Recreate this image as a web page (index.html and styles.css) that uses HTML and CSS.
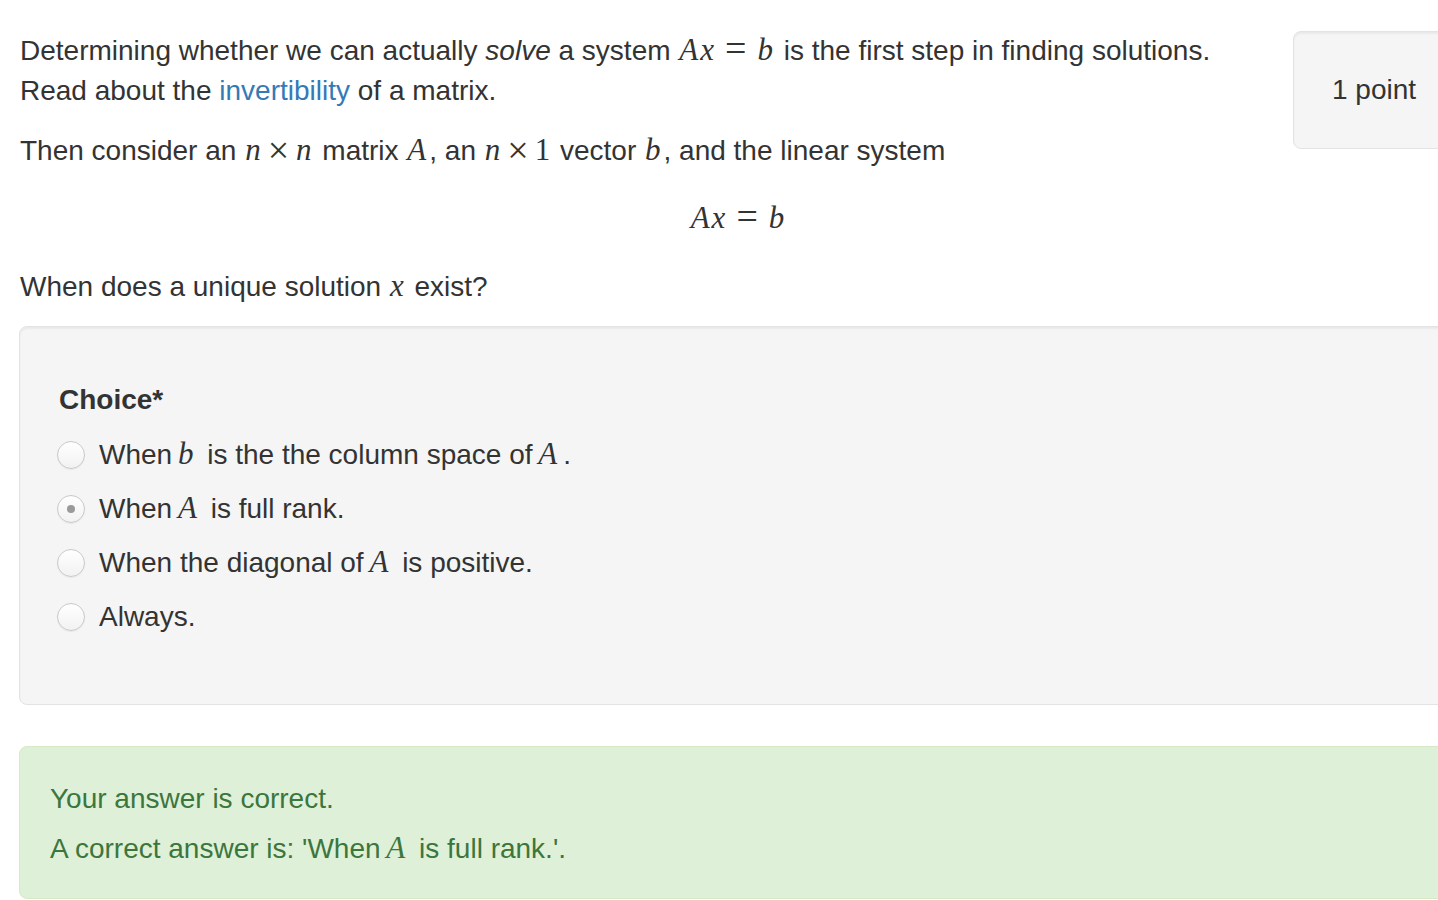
FILE: index.html
```html
<!DOCTYPE html>
<html lang="en">
<head>
<meta charset="utf-8">
<title>Invertibility question</title>
<link rel="stylesheet" href="styles.css">
</head>
<body>
<div class="page">
  <div class="question">
    <div class="points">1 point</div>
    <p>Determining whether we can actually <em>solve</em> a system <span class="math"><i>A</i><i>x</i><span class="rel">=</span><i>b</i></span> is the first step in finding solutions.<br>Read about the <a class="link" href="#">invertibility</a> of a matrix.</p>
    <p>Then consider an <span class="math"><i>n</i><span class="bin">×</span><i>n</i></span> matrix <span class="math"><i>A</i></span>, an <span class="math"><i>n</i><span class="bin">×</span><span class="mn">1</span></span> vector <span class="math"><i>b</i></span>, and the linear system</p>
    <div class="display"><span class="math"><i>A</i><i>x</i><span class="rel">=</span><i>b</i></span></div>
    <p>When does a unique solution <span class="math"><i>x</i></span> exist?</p>
  </div>

  <div class="well">
    <div class="field-label">Choice*</div>
    <div class="options">
      <label class="option"><input class="radio" type="radio" name="choice"><span>When <span class="math gap"><i>b</i></span> is the the column space of <span class="math gap"><i>A</i></span>.</span></label>
      <label class="option"><input class="radio" type="radio" name="choice" checked><span>When <span class="math gap"><i>A</i></span> is full rank.</span></label>
      <label class="option"><input class="radio" type="radio" name="choice"><span>When the diagonal of <span class="math gap"><i>A</i></span> is positive.</span></label>
      <label class="option"><input class="radio" type="radio" name="choice"><span>Always.</span></label>
    </div>
  </div>

  <div class="alert">
    <p>Your answer is correct.</p>
    <p>A correct answer is: 'When <span class="math gap"><i>A</i></span> is full rank.'.</p>
  </div>
</div>
</body>
</html>
```
FILE: styles.css
```css
html, body {
  margin: 0;
  padding: 0;
  background: #ffffff;
}

body {
  overflow: hidden;
  font-family: "Liberation Sans", Arial, Helvetica, sans-serif;
  font-size: 28px;
  line-height: 40px;
  color: #333333;
}

.page {
  width: 1440px;
  padding: 31px 0 0 19px;
}

.question {
  padding-left: 1px;
}

.question p {
  margin: 0 0 20px 0;
}

.question p:last-child {
  margin-bottom: 19px;
}

.points {
  float: right;
  width: 88px;
  margin: 0 0 0 20px;
  padding: 38px;
  background: #f5f5f5;
  border: 1px solid #e3e3e3;
  border-radius: 8px;
  box-shadow: inset 0 2px 2px rgba(0, 0, 0, 0.05);
  white-space: nowrap;
}

.link {
  color: #337ab7;
  text-decoration: none;
}

.math {
  font-family: "Liberation Serif", "Times New Roman", serif;
  font-size: 31px;
  line-height: 0;
  white-space: nowrap;
  margin-right: 2px;
}

.math i {
  font-style: italic;
  padding: 0 1px;
}

.math .rel {
  font-size: 38px;
  line-height: 0;
  margin: 0 10px;
  vertical-align: -1px;
}

.math .bin {
  font-size: 38px;
  line-height: 0;
  margin: 0 6px;
  vertical-align: -3px;
}

.math.gap {
  margin-left: -3px;
  margin-right: 5px;
}

.display {
  text-align: center;
  height: 56px;
  line-height: 56px;
  margin: 0 0 20px 0;
  padding-right: 4px;
}

.display .math {
  margin-right: 0;
}

.well {
  padding: 53px 38px 67px 39px;
  background: #f5f5f5;
  border: 1px solid #e3e3e3;
  border-radius: 8px;
  box-shadow: inset 0 2px 2px rgba(0, 0, 0, 0.05);
}

.field-label {
  font-weight: bold;
  margin-bottom: 15px;
}

.options {
  display: flex;
  flex-direction: column;
  gap: 14px;
}

.option {
  display: flex;
  align-items: center;
  gap: 14px;
  margin-left: -2px;
  height: 40px;
}

.radio {
  appearance: none;
  -webkit-appearance: none;
  margin: 0;
  width: 28px;
  height: 28px;
  flex: 0 0 28px;
  border-radius: 50%;
  border: 1px solid #c9c9c9;
  background: linear-gradient(#ffffff, #f2f2f2);
  box-shadow: 0 1px 1px rgba(0, 0, 0, 0.05);
  display: grid;
  place-items: center;
}

.radio:checked::after {
  content: "";
  width: 8px;
  height: 8px;
  border-radius: 50%;
  background: #9a9a9a;
}

.alert {
  margin-top: 41px;
  padding: 32px 30px 29px;
  background: #dff0d8;
  border: 1px solid #d6e9c6;
  border-radius: 8px;
  color: #3c763d;
}

.alert p {
  margin: 0 0 10px 0;
}

.alert p:last-child {
  margin-bottom: 0;
}
```
